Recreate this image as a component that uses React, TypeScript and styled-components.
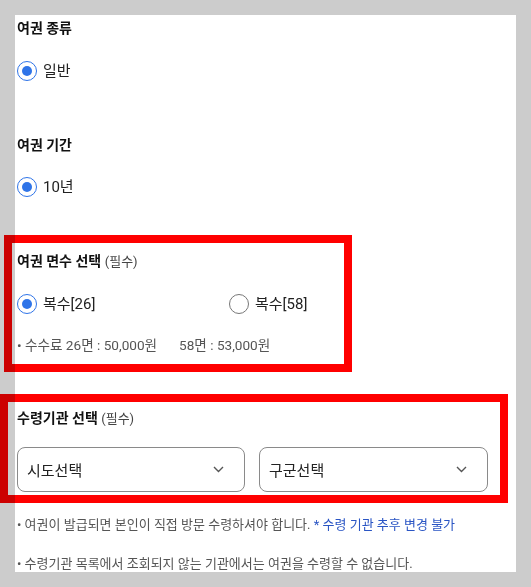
import React from 'react';
import styled, { createGlobalStyle } from 'styled-components';

const GlobalStyle = createGlobalStyle`
  html, body {
    margin: 0;
    padding: 0;
    background: #cccccc;
  }
  body {
    font-family: Roboto, "Noto Sans CJK KR", sans-serif;
    color: #222;
  }
`;

const Page = styled.div`
  position: relative;
  width: 531px;
  height: 587px;
  overflow: hidden;
`;

const Panel = styled.div`
  position: relative;
  margin: 15px 0 0 15px;
  width: 501px;
  height: 557px;
  box-sizing: border-box;
  background: #fff;
  padding: 3px 28px 0 2px;
`;

const Section = styled.section<{ $gap?: number }>`
  display: flex;
  flex-direction: column;
  gap: ${(p) => p.$gap ?? 22}px;
  margin-bottom: 54px;
`;

const Heading = styled.h3`
  margin: 0;
  font-size: 14px;
  line-height: 20px;
  font-weight: 700;
  color: #111;
`;

const Required = styled.span`
  font-size: 13px;
  font-weight: 400;
  color: #444;
`;

const RadioRow = styled.div`
  display: flex;
  align-items: center;
`;

const Option = styled.label<{ $width?: number }>`
  display: flex;
  align-items: center;
  gap: 6px;
  width: ${(p) => (p.$width ? `${p.$width}px` : 'auto')};
  font-size: 15px;
  line-height: 20px;
  color: #222;
`;

const Circle = styled.span<{ $checked?: boolean }>`
  position: relative;
  width: 20px;
  height: 20px;
  box-sizing: border-box;
  border-radius: 50%;
  border: 1.5px solid ${(p) => (p.$checked ? '#2f74e8' : '#777')};
  flex-shrink: 0;

  &::after {
    content: '';
    display: ${(p) => (p.$checked ? 'block' : 'none')};
    position: absolute;
    left: 50%;
    top: 50%;
    width: 10px;
    height: 10px;
    margin: -5px 0 0 -5px;
    border-radius: 50%;
    background: #2f74e8;
  }
`;

const Fee = styled.div`
  display: flex;
  gap: 22px;
  font-size: 13.6px;
  line-height: 18px;
  color: #555;
`;

const SelectRow = styled.div`
  display: grid;
  grid-template-columns: 228px 229px;
  gap: 14px;
`;

const Select = styled.div`
  display: flex;
  align-items: center;
  justify-content: space-between;
  height: 45px;
  box-sizing: border-box;
  padding: 0 20px 0 9px;
  border: 1px solid #8a8a8a;
  border-radius: 8px;
  font-size: 15px;
  color: #222;
`;

const Notes = styled.div`
  display: flex;
  flex-direction: column;
  gap: 21px;
  margin-top: -30px;
`;

const Note = styled.p`
  margin: 0;
  font-size: 13px;
  line-height: 18px;
  color: #555;
`;

const Blue = styled.span`
  color: #2a55c4;
`;

const Marker = styled.div<{ $left: number; $top: number; $w: number; $h: number }>`
  position: absolute;
  left: ${(p) => p.$left}px;
  top: ${(p) => p.$top}px;
  width: ${(p) => p.$w}px;
  height: ${(p) => p.$h}px;
  box-sizing: border-box;
  border: 8px solid #ff0000;
  mix-blend-mode: multiply;
  pointer-events: none;
`;

const Chevron = () => (
  <svg width="11" height="7" viewBox="0 0 11 7" fill="none">
    <path d="M1 1l4.5 4.5L10 1" stroke="#555" strokeWidth="1.4" />
  </svg>
);

const Radio: React.FC<{ label: string; checked?: boolean; width?: number }> = ({ label, checked, width }) => (
  <Option $width={width}>
    <Circle $checked={checked} />
    {label}
  </Option>
);

export default function App() {
  return (
    <Page>
      <GlobalStyle />
      <Panel>
        <Section $gap={23}>
          <Heading>여권 종류</Heading>
          <RadioRow>
            <Radio label="일반" checked />
          </RadioRow>
        </Section>

        <Section>
          <Heading>여권 기간</Heading>
          <RadioRow>
            <Radio label="10년" checked />
          </RadioRow>
        </Section>

        <Section>
          <Heading>
            여권 면수 선택 <Required>(필수)</Required>
          </Heading>
          <RadioRow>
            <Radio label="복수[26]" checked width={212} />
            <Radio label="복수[58]" />
          </RadioRow>
          <Fee>
            <span>• 수수료 26면 : 50,000원</span>
            <span>58면 : 53,000원</span>
          </Fee>
        </Section>

        <Section $gap={18}>
          <Heading>
            수령기관 선택 <Required>(필수)</Required>
          </Heading>
          <SelectRow>
            <Select>
              시도선택
              <Chevron />
            </Select>
            <Select>
              구군선택
              <Chevron />
            </Select>
          </SelectRow>
        </Section>

        <Notes>
          <Note>
            • 여권이 발급되면 본인이 직접 방문 수령하셔야 합니다. <Blue>* 수령 기관 추후 변경 불가</Blue>
          </Note>
          <Note>• 수령기관 목록에서 조회되지 않는 기관에서는 여권을 수령할 수 없습니다.</Note>
        </Notes>
      </Panel>
      <Marker $left={4} $top={235} $w={348} $h={137} />
      <Marker $left={0} $top={394} $w={508} $h={109} />
    </Page>
  );
}
